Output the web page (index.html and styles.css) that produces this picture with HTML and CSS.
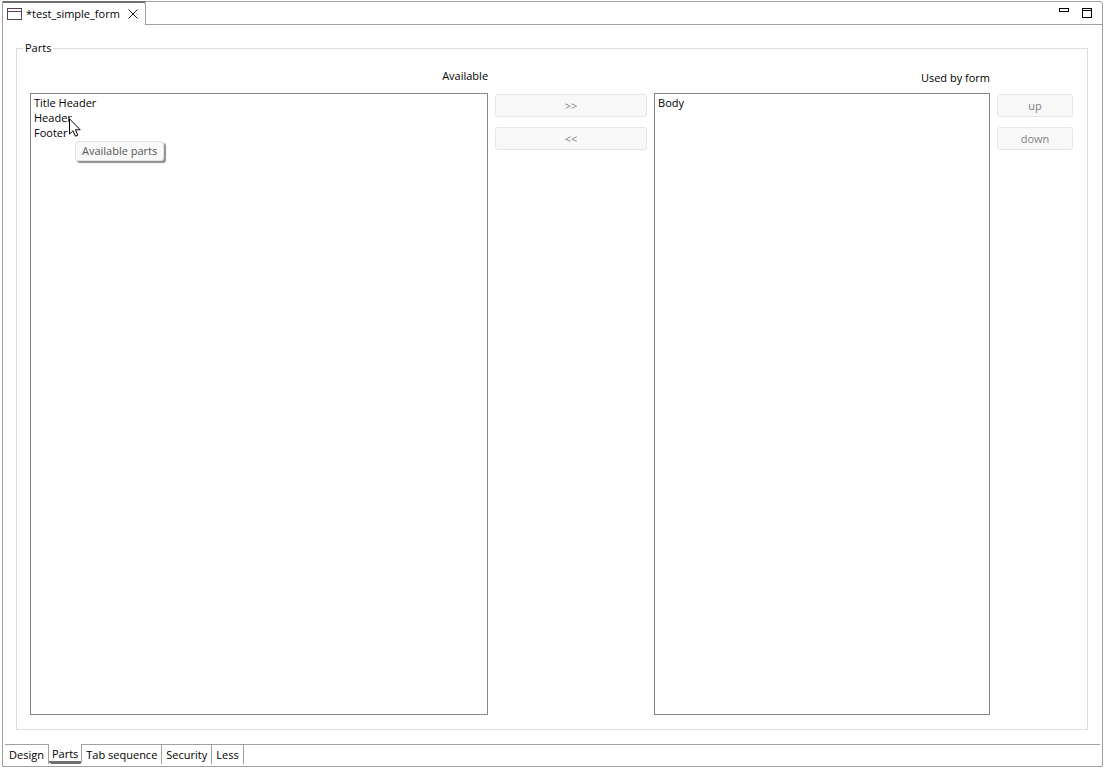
FILE: index.html
```html
<!DOCTYPE html>
<html lang="en">
<head>
    <meta charset="UTF-8">
    <meta name="viewport" content="width=device-width, initial-scale=1.0">
    <title>test_simple_form</title>
    <link rel="stylesheet" href="styles.css">
</head>
<body>
    <div class="editor">
        <header class="editor-header">
            <div class="editor-tab">
                <svg class="form-icon" width="15" height="12" viewBox="0 0 15 12" fill="none" stroke="#5a3f55" shape-rendering="crispEdges">
                    <rect x="0.5" y="0.5" width="14" height="11"/>
                    <path d="M1 3.5H14"/>
                </svg>
                <span class="editor-title">*test_simple_form</span>
                <button class="icon-button" aria-label="Close">
                    <svg width="10" height="10" viewBox="0 0 10 10" stroke="#222" fill="none">
                        <path d="M0.5 0.5L9.5 9.5M9.5 0.5L0.5 9.5"/>
                    </svg>
                </button>
            </div>
            <div class="window-buttons">
                <button class="icon-button" aria-label="Minimize">
                    <svg width="10" height="10" viewBox="0 0 10 10" stroke="#000" fill="none" shape-rendering="crispEdges">
                        <rect x="0.5" y="0.5" width="9" height="3"/>
                    </svg>
                </button>
                <button class="icon-button" aria-label="Maximize">
                    <svg width="10" height="10" viewBox="0 0 10 10" stroke="#000" fill="none" shape-rendering="crispEdges">
                        <rect x="0.5" y="0.5" width="9" height="9"/>
                        <path d="M1 2.5H9"/>
                    </svg>
                </button>
            </div>
        </header>

        <main class="page">
            <fieldset class="parts">
                <legend>Parts</legend>
                <label class="available-label" for="available">Available</label>
                <label class="used-label" for="used">Used by form</label>
                <div class="list-box available-box">
                    <select id="available" size="3" aria-describedby="available-tip">
                        <option>Title Header</option>
                        <option>Header</option>
                        <option>Footer</option>
                    </select>
                    <svg class="cursor" width="12" height="19" viewBox="0 0 12 19">
                        <path d="M0.5 0.8V16.2L4 12.8L6.4 18.2L8.8 17.2L6.4 11.8H11.2Z" fill="#fff" stroke="#000"/>
                    </svg>
                    <div class="tooltip" id="available-tip" role="tooltip">Available parts</div>
                </div>
                <div class="buttons">
                    <button disabled>&gt;&gt;</button>
                    <button disabled>&lt;&lt;</button>
                </div>
                <div class="list-box">
                    <select id="used" size="3">
                        <option>Body</option>
                    </select>
                </div>
                <div class="buttons">
                    <button disabled>up</button>
                    <button disabled>down</button>
                </div>
            </fieldset>
        </main>

        <nav class="page-tabs">
            <button>Design</button>
            <button class="active">Parts</button>
            <button>Tab sequence</button>
            <button>Security</button>
            <button>Less</button>
        </nav>
    </div>
</body>
</html>
```
FILE: styles.css
```css
* {
    box-sizing: border-box;
}
body {
    margin: 0;
    padding: 1px 1px 1px 2px;
    height: 100vh;
    background-color: #fff;
    color: #000;
    font-family: "Open Sans", "Noto Sans", sans-serif;
    font-size: 11px;
    line-height: 16px;
}
button, select {
    font: inherit;
    color: inherit;
}
.editor {
    display: flex;
    flex-direction: column;
    height: 100%;
    border: 1px solid #a0a0a0;
    border-radius: 0 3px 0 0;
}
.editor-header {
    display: flex;
    justify-content: space-between;
    height: 23px;
    border-bottom: 1px solid #a0a0a0;
}
.editor-tab {
    display: flex;
    align-items: center;
    height: 24px;
    margin-top: -1px;
    padding: 0 7px 1px 4px;
    border-top: 2px solid #746f6f;
    border-right: 1px solid #a0a0a0;
    border-radius: 0 3px 0 0;
    background-color: #fff;
}
.editor-title {
    margin: 0 8px 0 4px;
}
.icon-button {
    display: flex;
    padding: 0;
    border: none;
    background: none;
}
.window-buttons {
    display: flex;
    gap: 13px;
    padding: 6px 10px 0 0;
}
.page {
    display: flex;
    flex: 1;
    padding: 15px 14px 14px 13px;
}
.parts {
    display: grid;
    grid-template-columns: 15fr 152px 11fr 76px;
    grid-template-rows: 25px 1fr;
    column-gap: 7px;
    flex: 1;
    min-width: 0;
    margin: 0;
    padding: 12px 14px 14px 13px;
    border: 1px solid #dcdcdc;
}
.parts legend {
    margin-left: -7px;
    padding: 0 2px;
}
.available-label, .used-label {
    text-align: right;
}
.used-label {
    grid-column: 3;
    padding-top: 2px;
}
.available-box {
    grid-column: 1;
}
.list-box {
    position: relative;
    display: flex;
}
.list-box select {
    width: 100%;
    padding: 1px 0;
    border: 1px solid #828790;
    border-radius: 0;
    background-color: #fff;
    outline: none;
    overflow: hidden;
}
.list-box option {
    min-height: 15px;
    padding: 0 3px;
}
.cursor {
    position: absolute;
    top: 25px;
    left: 39px;
}
.tooltip {
    position: absolute;
    top: 48px;
    left: 45px;
    padding: 1px 6px;
    border: 1px solid #e3e3e3;
    border-radius: 3px;
    background-color: #f9f9f9;
    box-shadow: 2px 2px 1px #909090;
    color: #575757;
    white-space: nowrap;
}
.buttons {
    display: flex;
    flex-direction: column;
    gap: 10px;
    padding-top: 1px;
}
.buttons button {
    height: 23px;
    padding: 0;
    border: 1px solid #e6e6e6;
    border-radius: 3px;
    background-color: #f8f8f8;
    color: #838383;
}
.page-tabs {
    display: flex;
    height: 22px;
    margin: 0 2px;
    border-top: 1px solid #a0a0a0;
}
.page-tabs button {
    height: 19px;
    padding: 0 4px;
    border: none;
    border-right: 1px solid #a0a0a0;
    background-color: #fff;
}
.page-tabs .active {
    height: 20px;
    margin-top: -1px;
    padding: 2px 3px 0;
    border-bottom: 3px solid #746f6f;
    border-radius: 0 0 3px 3px;
}
```
